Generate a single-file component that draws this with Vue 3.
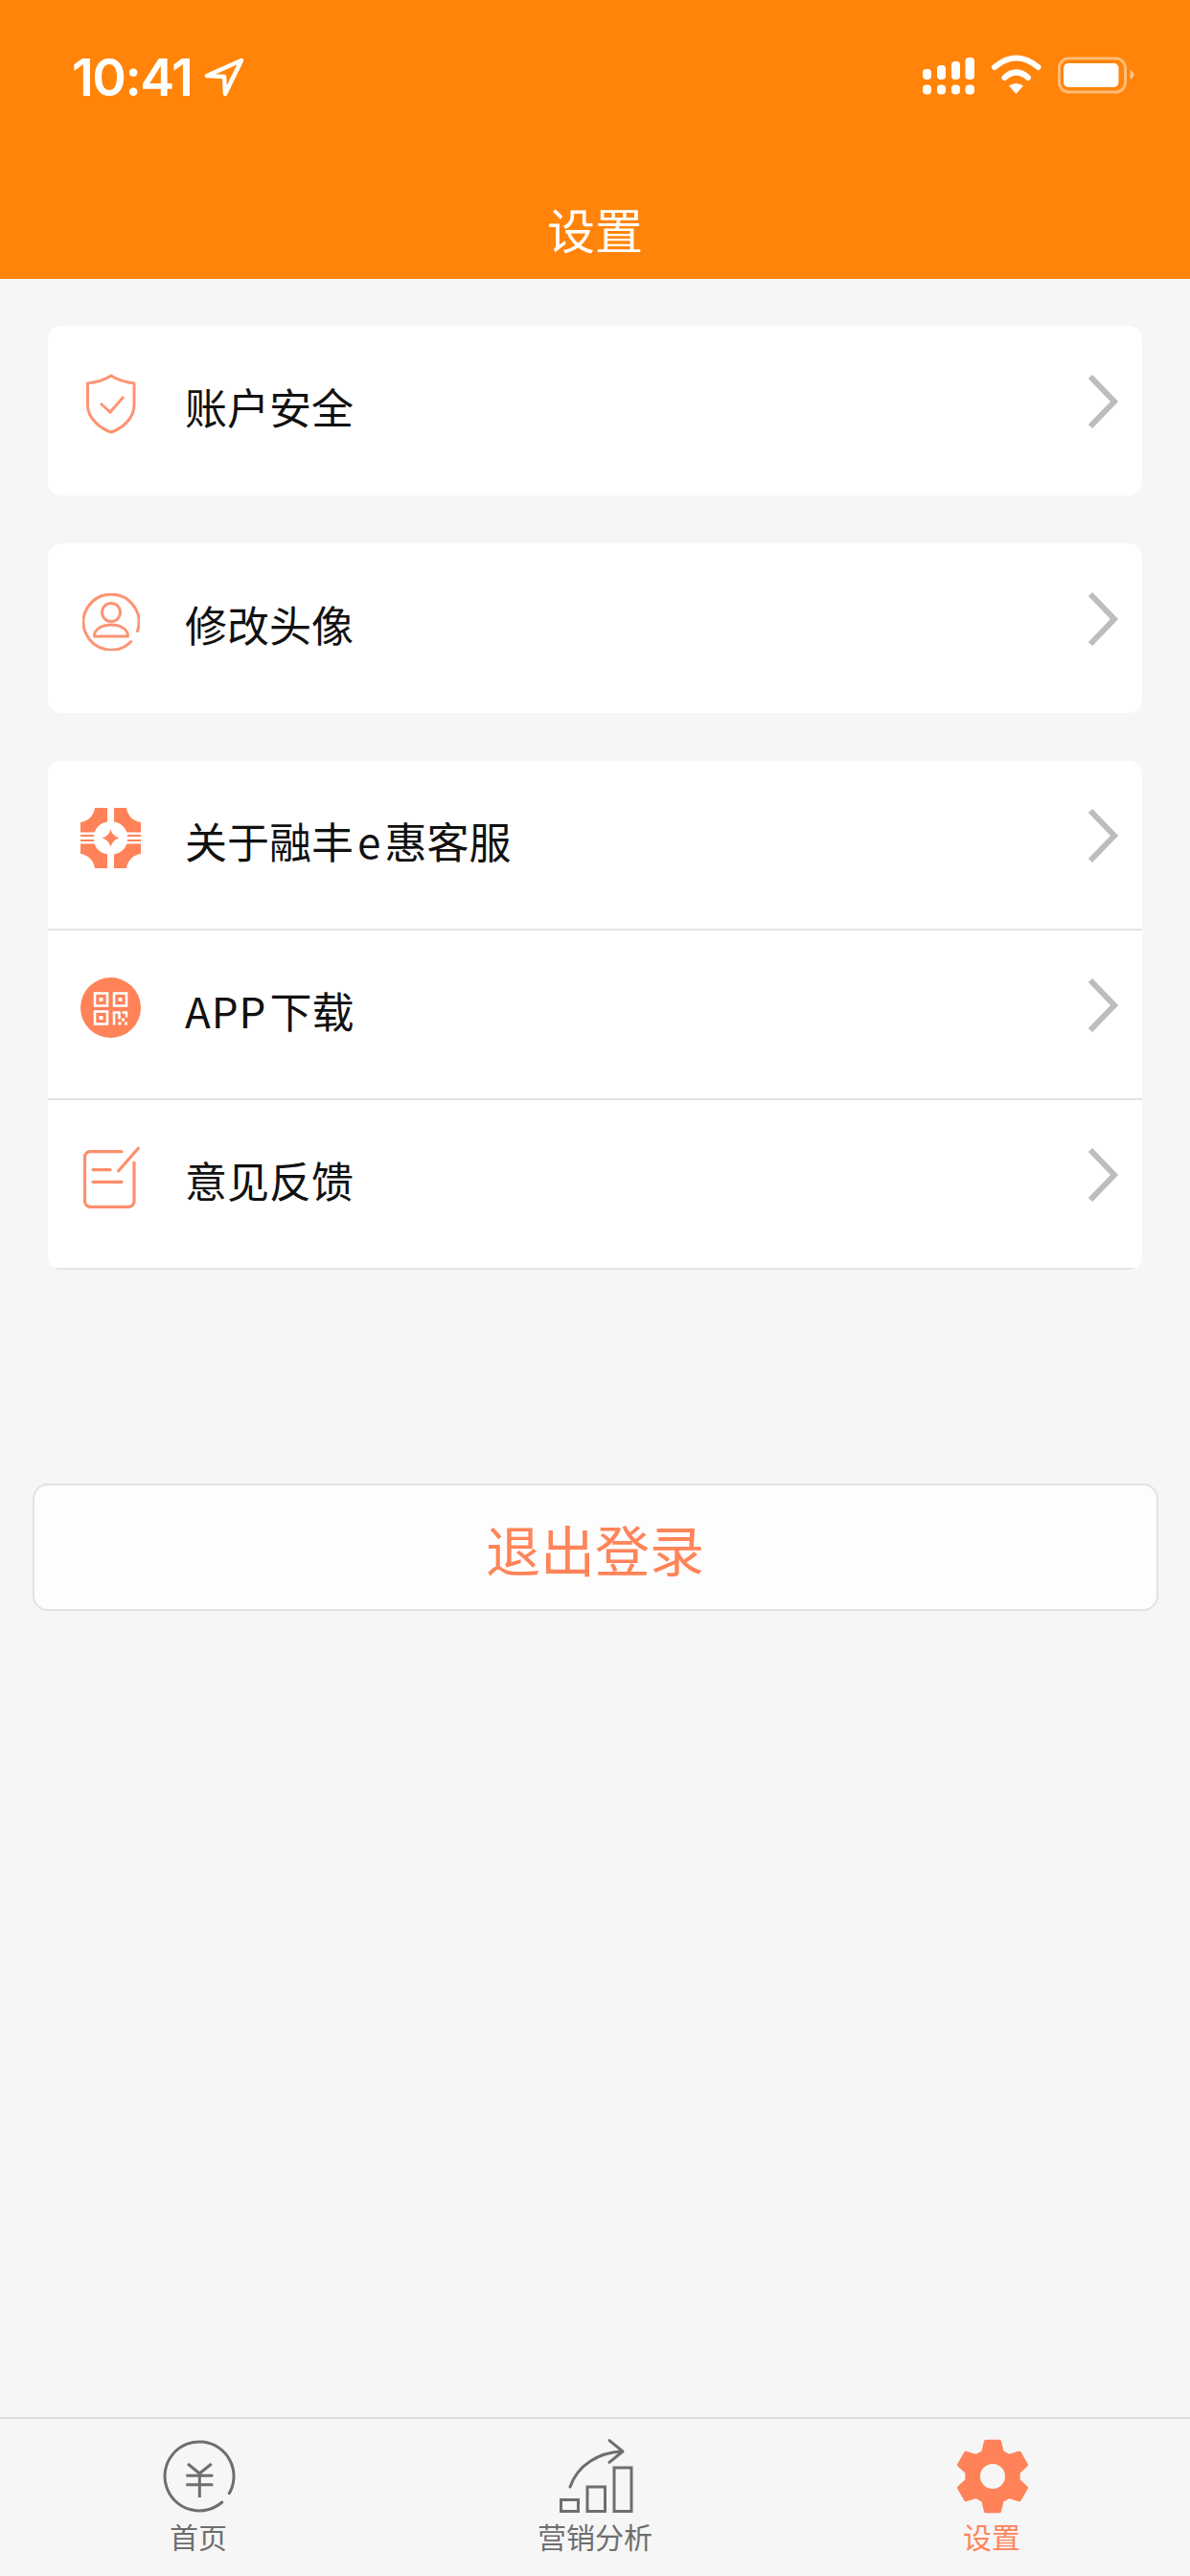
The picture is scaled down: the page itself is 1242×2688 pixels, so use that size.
<template>
  <div class="page">
    <header class="header">
      <div class="status">
        <div class="time">
          <span>10:41</span>
          <svg class="nav-arrow" width="44" height="44" viewBox="0 0 44 44">
            <path d="M40 4 L4 20 L22 21 L23 39 Z" fill="none" stroke="#fff" stroke-width="4.5" stroke-linejoin="round" />
          </svg>
        </div>
        <svg width="270" height="70" viewBox="0 0 270 70">
          <rect x="23" y="32" width="9" height="11" rx="4" fill="#fff" />
          <rect x="38" y="28" width="9" height="15" rx="4" fill="#fff" />
          <rect x="53" y="24" width="9" height="19" rx="4" fill="#fff" />
          <rect x="67.500" y="20" width="9.500" height="23" rx="4" fill="#fff" />
          <rect x="23" y="48.500" width="9" height="10" rx="4" fill="#fff" />
          <rect x="38" y="48.500" width="9" height="10" rx="4" fill="#fff" />
          <rect x="53" y="48.500" width="9" height="10" rx="4" fill="#fff" />
          <rect x="67.500" y="48.500" width="9.500" height="10" rx="4" fill="#fff" />
          <path d="M98 30 Q120.500 11 143.500 30" fill="none" stroke="#fff" stroke-width="6" stroke-linecap="round" />
          <path d="M108.500 41 Q120.500 30 133 41" fill="none" stroke="#fff" stroke-width="6" stroke-linecap="round" />
          <path d="M113 49.500 Q120.500 44.500 128 49.500 L120.500 58 Z" fill="#fff" />
          <rect x="165.500" y="21" width="69" height="35" rx="10" fill="none" stroke="#fff" stroke-opacity="0.45" stroke-width="3" />
          <rect x="170" y="26" width="57.500" height="25" rx="5" fill="#fff" />
          <path d="M239.500 33 C242 34 243.500 36 243.500 38 C243.500 40 242 42 239.500 43 Z" fill="#fff" fill-opacity="0.5" />
        </svg>
      </div>
      <h1 class="title">设置</h1>
    </header>

    <main class="content">
      <div class="card">
        <div class="row">
          <div class="row-icon">
            <svg width="56" height="66" viewBox="-2 -2 56 66" fill="none" stroke="#fc9473" stroke-width="3">
              <path d="M26 1 C20 5 10 8 1.500 9 V32 C1.500 45 14 56 26 60 C38 56 50 45 50 32 V9 C42 8 32 5 26 1 Z" stroke-linejoin="round" />
              <path d="M15 30 L25 39 L39 23" />
            </svg>
          </div>
          <span class="row-label">账户安全</span>
          <svg class="chevron" width="36" height="62" viewBox="0 0 36 62">
            <path d="M6 5 L31 31 L6 57" fill="none" stroke="#bdbdbd" stroke-width="6" />
          </svg>
        </div>
      </div>

      <div class="card">
        <div class="row">
          <div class="row-icon">
            <svg width="60" height="60" viewBox="0 0 60 60" fill="none" stroke="#fc9473" stroke-width="3">
              <path d="M50.700 50.500 A29 29 0 1 1 57.500 39.500" stroke-linecap="round" />
              <circle cx="30" cy="20" r="9.500" />
              <path d="M12.500 45 C12 38 20 33 30 33 C40 33 48 38 47.500 45 Z" stroke-linejoin="round" />
            </svg>
          </div>
          <span class="row-label">修改头像</span>
          <svg class="chevron" width="36" height="62" viewBox="0 0 36 62">
            <path d="M6 5 L31 31 L6 57" fill="none" stroke="#bdbdbd" stroke-width="6" />
          </svg>
        </div>
      </div>

      <div class="card">
        <div class="row">
          <div class="row-icon">
            <svg width="63" height="63" viewBox="0 0 63 63" fill="#ff8258">
              <path d="M15 0 H28 V14.500 A17.500 17.500 0 0 0 14.500 25.500 H0 V15 C8 14 14 8 15 0 Z" />
              <path d="M15 0 H28 V14.500 A17.500 17.500 0 0 0 14.500 25.500 H0 V15 C8 14 14 8 15 0 Z" transform="matrix(-1 0 0 1 63 0)" />
              <path d="M15 0 H28 V14.500 A17.500 17.500 0 0 0 14.500 25.500 H0 V15 C8 14 14 8 15 0 Z" transform="matrix(1 0 0 -1 0 63)" />
              <path d="M15 0 H28 V14.500 A17.500 17.500 0 0 0 14.500 25.500 H0 V15 C8 14 14 8 15 0 Z" transform="matrix(-1 0 0 -1 63 63)" />
              <rect x="0" y="28" width="14" height="2" />
              <rect x="0" y="33" width="14" height="2" />
              <rect x="49" y="28" width="14" height="2" />
              <rect x="49" y="33" width="14" height="2" />
              <path d="M31.500 22.500 Q33.500 29.500 40.500 31.500 Q33.500 33.500 31.500 40.500 Q29.500 33.500 22.500 31.500 Q29.500 29.500 31.500 22.500 Z" />
            </svg>
          </div>
          <span class="row-label">关于融丰<span class="letter-e">e</span>惠客服</span>
          <svg class="chevron" width="36" height="62" viewBox="0 0 36 62">
            <path d="M6 5 L31 31 L6 57" fill="none" stroke="#bdbdbd" stroke-width="6" />
          </svg>
        </div>
        <div class="row">
          <div class="row-icon">
            <svg width="63" height="63" viewBox="-31.500 -31.500 63 63">
              <circle cx="0" cy="0" r="31.500" fill="#ff8258" />
              <g fill="none" stroke="#fff" stroke-width="2.600">
                <rect x="-16.500" y="-15" width="13" height="13" />
                <rect x="3.500" y="-15" width="13" height="13" />
                <rect x="-16.500" y="4" width="13" height="13" />
                <path d="M3.500 18 V5 H9 V12 M12 5 H16.500 V10" />
              </g>
              <g fill="#fff">
                <rect x="-12" y="-10.500" width="4" height="4" />
                <rect x="8" y="-10.500" width="4" height="4" />
                <rect x="-12" y="8.500" width="4" height="4" />
                <rect x="8" y="15" width="3" height="3" />
                <rect x="14.500" y="15" width="3" height="3" />
                <rect x="11.500" y="11" width="3" height="3" />
              </g>
            </svg>
          </div>
          <span class="row-label"><span class="latin">APP</span>下载</span>
          <svg class="chevron" width="36" height="62" viewBox="0 0 36 62">
            <path d="M6 5 L31 31 L6 57" fill="none" stroke="#bdbdbd" stroke-width="6" />
          </svg>
        </div>
        <div class="row">
          <div class="row-icon">
            <svg width="62" height="66" viewBox="0 0 62 66" fill="none" stroke="#fc8f6c" stroke-width="3.200" stroke-linecap="round">
              <path d="M42 5.700 H9 A5.500 5.500 0 0 0 3.500 11.200 V57.800 A5.500 5.500 0 0 0 9 63.300 H49.500 A5.500 5.500 0 0 0 55 57.800 V17" />
              <path d="M38.700 25.700 L59.300 2.300" />
              <path d="M12 24.700 H30" />
              <path d="M12 37.300 H42" />
            </svg>
          </div>
          <span class="row-label">意见反馈</span>
          <svg class="chevron" width="36" height="62" viewBox="0 0 36 62">
            <path d="M6 5 L31 31 L6 57" fill="none" stroke="#bdbdbd" stroke-width="6" />
          </svg>
        </div>
      </div>

      <button class="logout" type="button">退出登录</button>
    </main>

    <nav class="tabbar">
      <div class="tab">
        <svg class="yen" width="76" height="80" viewBox="0 -2 76 80" fill="none" stroke="#6e6e6e" stroke-width="3">
          <path d="M61.700 65 A36 36 0 1 1 69.300 55.700" stroke-linecap="round" />
          <path d="M26 25 L38.300 35 L50.700 25 M24.300 37.300 H52.300 M24.300 46.700 H52.300 M38.300 35 V60" />
        </svg>
        <span>首页</span>
      </div>
      <div class="tab">
        <svg width="102" height="80" viewBox="0 14 102 80" fill="none" stroke="#6e6e6e" stroke-width="3">
          <path d="M25 65 C33 42 55 29 79 28" stroke-linecap="round" />
          <path d="M66 16.700 L80 28 L66 39.300" stroke-linecap="round" stroke-linejoin="round" />
          <rect x="15.500" y="78.500" width="18" height="12" />
          <rect x="43" y="65" width="18.500" height="25.500" />
          <rect x="71" y="45" width="18" height="45.500" />
        </svg>
        <span>营销分析</span>
      </div>
      <div class="tab active">
        <svg class="gear" width="80" height="80" viewBox="0 0 80 80">
          <path :d="gearPath" fill="#ff8258" fill-rule="evenodd" stroke="#ff8258" stroke-width="4" stroke-linejoin="round" />
        </svg>
        <span>设置</span>
      </div>
    </nav>
  </div>
</template>

<script setup>
// six teeth, flat tip pointing up, round hole in the middle
function buildGear() {
  const cx = 40;
  const cy = 40;
  const tip = 37;
  const root = 27;
  const hole = 15;
  let d = '';
  for (let i = 0; i < 6; i++) {
    const a = -90 + i * 60;
    const pts = [
      [root, a - 21],
      [tip, a - 11],
      [tip, a + 11],
      [root, a + 21]
    ];
    pts.forEach(([r, deg], j) => {
      const rad = (deg * Math.PI) / 180;
      const x = (cx + r * Math.cos(rad)).toFixed(2);
      const y = (cy + r * Math.sin(rad)).toFixed(2);
      d += `${i === 0 && j === 0 ? 'M' : 'L'}${x} ${y} `;
    });
  }
  d += `Z M${cx - hole} ${cy} A${hole} ${hole} 0 1 0 ${cx + hole} ${cy} A${hole} ${hole} 0 1 0 ${cx - hole} ${cy} Z`;
  return d;
}

const gearPath = buildGear();
</script>

<style>
html,
body {
  margin: 0;
  background: #f6f6f6;
}
</style>

<style scoped>
.page {
  width: 1242px;
  min-height: 2688px;
  display: flex;
  flex-direction: column;
  background: #f6f6f6;
  font-family: "Noto Sans CJK SC", "Noto Sans", sans-serif;
}

.header {
  height: 291px;
  box-sizing: border-box;
  padding-top: 40px;
  background: #ff8409;
  color: #fff;
}

.status {
  display: flex;
  justify-content: space-between;
  align-items: center;
  height: 70px;
  padding: 0 32px 0 75px;
}

.time {
  display: flex;
  align-items: center;
  gap: 12px;
  margin-top: 11px;
  font-family: Inter, "Liberation Sans", sans-serif;
  font-size: 54px;
  font-weight: 600;
  letter-spacing: -1.5px;
  line-height: 70px;
}

.title {
  margin: 95px 0 0;
  font-size: 50px;
  font-weight: 400;
  line-height: 66px;
  text-align: center;
}

.content {
  flex: 1;
  padding: 49px 50px 0;
  display: flex;
  flex-direction: column;
  gap: 50px;
}

.card {
  background: #fff;
  border-radius: 14px;
  overflow: hidden;
}

.row {
  height: 177px;
  box-sizing: border-box;
  display: flex;
  align-items: center;
  border-bottom: 2px solid #e4e4e4;
}

.card:nth-child(-n + 2) .row {
  border-bottom: none;
}

.row-icon {
  width: 131px;
  margin-right: 12px;
  margin-bottom: 14px;
  display: flex;
  justify-content: center;
}

.row-label {
  flex: 1;
  margin-bottom: 10px;
  font-size: 44px;
  line-height: 60px;
  color: #111;
}

.letter-e {
  margin: 0 4px;
}

.latin {
  letter-spacing: 1px;
  margin-right: 3px;
}

.chevron {
  margin-right: 24px;
  margin-bottom: 19px;
}

.logout {
  align-self: center;
  width: 1175px;
  height: 133px;
  margin-top: 173px;
  border: 2px solid #e2e2e2;
  border-radius: 16px;
  background: #fdfdfd;
  color: #ff8459;
  font-family: inherit;
  font-size: 57px;
  font-weight: 400;
  padding: 0;
}

.tabbar {
  height: 166px;
  box-sizing: border-box;
  display: grid;
  grid-template-columns: repeat(3, 1fr);
  padding-top: 20px;
  border-top: 2px solid #dcdcdc;
  background: #f6f6f6;
}

.tab {
  display: flex;
  flex-direction: column;
  align-items: center;
  color: #6e6e6e;
  font-size: 30px;
  line-height: 44px;
}

.yen {
  margin-left: 2px;
}

.gear {
  margin-left: 2px;
}

.tab.active {
  color: #ff8459;
}
</style>
